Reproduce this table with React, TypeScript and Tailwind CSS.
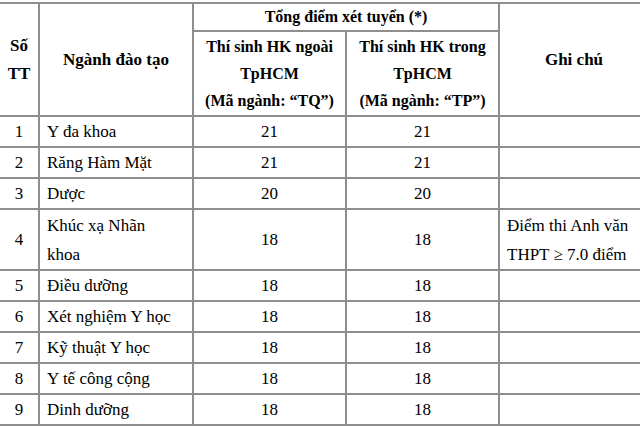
import React from "react";

const rows = [
  { stt: "1", name: "Y đa khoa", tq: "21", tp: "21" },
  { stt: "2", name: "Răng Hàm Mặt", tq: "21", tp: "21" },
  { stt: "3", name: "Dược", tq: "20", tp: "20" },
  { stt: "4", name: "Khúc xạ Nhãn khoa", tq: "18", tp: "18", note: true },
  { stt: "5", name: "Điều dưỡng", tq: "18", tp: "18" },
  { stt: "6", name: "Xét nghiệm Y học", tq: "18", tp: "18" },
  { stt: "7", name: "Kỹ thuật Y học", tq: "18", tp: "18" },
  { stt: "8", name: "Y tế công cộng", tq: "18", tp: "18" },
  { stt: "9", name: "Dinh dưỡng", tq: "18", tp: "18" },
];

// serif font set on every cell, tables may not inherit in quirks mode
const cell =
  "border-2 border-[#8e8e8e] p-0 text-black font-[Liberation_Serif,Times_New_Roman,serif]";
const head = `${cell} text-[16px] font-bold`;
const headLg = `${cell} text-[17px] font-bold`;
const body = `${cell} text-[17px]`;

const App = () => {
  return (
    <div className="w-[640px] h-[426px] overflow-hidden bg-white text-black font-serif">
      <table className="table-fixed border-collapse mt-[2px] ml-[-2px] w-[650px] font-serif">
        <colgroup>
          <col className="w-[40px]" />
          <col className="w-[154px]" />
          <col className="w-[153px]" />
          <col className="w-[153px]" />
          <col className="w-[150px]" />
        </colgroup>
        <thead className="text-center">
          <tr className="h-[28px] leading-[26px]">
            <td rowSpan={2} className={`${headLg} leading-[28px]`}>
              Số
              <br />
              TT
            </td>
            <td rowSpan={2} className={headLg}>
              Ngành đào tạo
            </td>
            <td colSpan={2} className={head}>
              Tổng điểm xét tuyển (*)
            </td>
            <td rowSpan={2} className={headLg}>
              Ghi chú
            </td>
          </tr>
          <tr className="h-[85px] leading-[27px]">
            <td className={head}>
              Thí sinh HK ngoài
              <br />
              TpHCM
              <br />
              (Mã ngành: “TQ”)
            </td>
            <td className={head}>
              Thí sinh HK trong
              <br />
              TpHCM
              <br />
              (Mã ngành: “TP”)
            </td>
          </tr>
        </thead>
        <tbody>
          {rows.map((r) => (
            <tr
              key={r.stt}
              className={r.note ? "h-[61px] leading-[29px]" : "h-[31px] leading-[27px]"}
            >
              <td className={`${body} text-center`}>{r.stt}</td>
              <td className={`${body} pl-[7px]`}>
                {r.note ? (
                  <>
                    Khúc xạ Nhãn
                    <br />
                    khoa
                  </>
                ) : (
                  r.name
                )}
              </td>
              <td className={`${body} text-center`}>{r.tq}</td>
              <td className={`${body} text-center`}>{r.tp}</td>
              <td className={`${body} pl-[7px]`}>
                {r.note ? (
                  <>
                    Điểm thi Anh văn
                    <br />
                    THPT ≥ 7.0 điểm
                  </>
                ) : null}
              </td>
            </tr>
          ))}
        </tbody>
      </table>
    </div>
  );
};

export default App;
